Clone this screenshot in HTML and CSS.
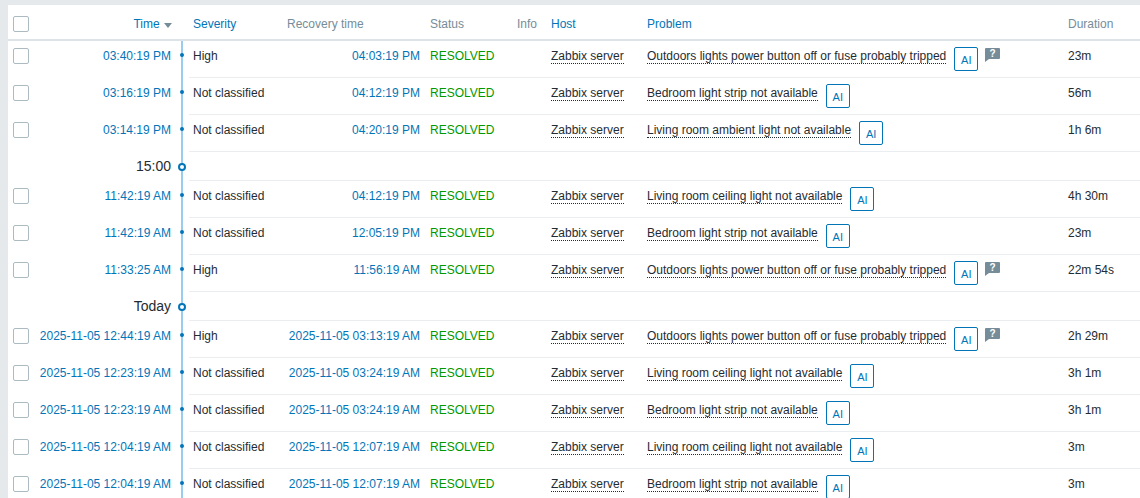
FILE: index.html
```html
<!DOCTYPE html>
<html lang="en">
<head>
    <meta charset="UTF-8">
    <title>Problems</title>
    <link rel="stylesheet" href="styles.css">
</head>
<body>
    <div class="container">
        <table class="problems">
            <colgroup>
                <col class="col-check"><col class="col-time"><col class="col-line"><col class="col-severity"><col class="col-recovery"><col class="col-status"><col class="col-info"><col class="col-host"><col class="col-problem"><col>
            </colgroup>
            <thead>
                <tr>
                    <th><span class="check"></span></th>
                    <th class="right"><a>Time <span class="sort"></span></a></th>
                    <th></th>
                    <th><a>Severity</a></th>
                    <th>Recovery time</th>
                    <th>Status</th>
                    <th>Info</th>
                    <th><a>Host</a></th>
                    <th><a>Problem</a></th>
                    <th>Duration</th>
                </tr>
            </thead>
            <tbody>
                <tr>
                    <td><span class="check"></span></td><td class="time"><a>03:40:19 PM</a></td><td class="line"><i class="dot"></i></td><td class="b">High</td><td class="b right"><a>04:03:19 PM</a></td><td class="b ok">RESOLVED</td><td class="b"></td><td class="b"><span class="dotted">Zabbix server</span></td>
                    <td class="b"><span class="dotted">Outdoors lights power button off or fuse probably tripped</span><span class="ai">AI</span><svg class="msg" width="15" height="14" viewBox="0 0 15 14"><path d="M1 0h13a1 1 0 0 1 1 1v9a1 1 0 0 1-1 1H4l-4 3V1a1 1 0 0 1 1-1z" fill="#768d99"/><text x="7.5" y="9" text-anchor="middle" class="msg-text">?</text></svg></td><td class="b">23m</td>
                </tr>
                <tr>
                    <td><span class="check"></span></td><td class="time"><a>03:16:19 PM</a></td><td class="line"><i class="dot"></i></td><td class="b">Not classified</td><td class="b right"><a>04:12:19 PM</a></td><td class="b ok">RESOLVED</td><td class="b"></td><td class="b"><span class="dotted">Zabbix server</span></td>
                    <td class="b"><span class="dotted">Bedroom light strip not available</span><span class="ai">AI</span></td><td class="b">56m</td>
                </tr>
                <tr>
                    <td><span class="check"></span></td><td class="time"><a>03:14:19 PM</a></td><td class="line"><i class="dot"></i></td><td class="b">Not classified</td><td class="b right"><a>04:20:19 PM</a></td><td class="b ok">RESOLVED</td><td class="b"></td><td class="b"><span class="dotted">Zabbix server</span></td>
                    <td class="b"><span class="dotted">Living room ambient light not available</span><span class="ai">AI</span></td><td class="b">1h 6m</td>
                </tr>
                <tr class="group">
                    <td></td><td class="time">15:00</td><td class="line"><i class="ring"></i></td><td class="b" colspan="7"></td>
                </tr>
                <tr>
                    <td><span class="check"></span></td><td class="time"><a>11:42:19 AM</a></td><td class="line"><i class="dot"></i></td><td class="b">Not classified</td><td class="b right"><a>04:12:19 PM</a></td><td class="b ok">RESOLVED</td><td class="b"></td><td class="b"><span class="dotted">Zabbix server</span></td>
                    <td class="b"><span class="dotted">Living room ceiling light not available</span><span class="ai">AI</span></td><td class="b">4h 30m</td>
                </tr>
                <tr>
                    <td><span class="check"></span></td><td class="time"><a>11:42:19 AM</a></td><td class="line"><i class="dot"></i></td><td class="b">Not classified</td><td class="b right"><a>12:05:19 PM</a></td><td class="b ok">RESOLVED</td><td class="b"></td><td class="b"><span class="dotted">Zabbix server</span></td>
                    <td class="b"><span class="dotted">Bedroom light strip not available</span><span class="ai">AI</span></td><td class="b">23m</td>
                </tr>
                <tr>
                    <td><span class="check"></span></td><td class="time"><a>11:33:25 AM</a></td><td class="line"><i class="dot"></i></td><td class="b">High</td><td class="b right"><a>11:56:19 AM</a></td><td class="b ok">RESOLVED</td><td class="b"></td><td class="b"><span class="dotted">Zabbix server</span></td>
                    <td class="b"><span class="dotted">Outdoors lights power button off or fuse probably tripped</span><span class="ai">AI</span><svg class="msg" width="15" height="14" viewBox="0 0 15 14"><path d="M1 0h13a1 1 0 0 1 1 1v9a1 1 0 0 1-1 1H4l-4 3V1a1 1 0 0 1 1-1z" fill="#768d99"/><text x="7.5" y="9" text-anchor="middle" class="msg-text">?</text></svg></td><td class="b">22m 54s</td>
                </tr>
                <tr class="group">
                    <td></td><td class="time">Today</td><td class="line"><i class="ring"></i></td><td class="b" colspan="7"></td>
                </tr>
                <tr>
                    <td><span class="check"></span></td><td class="time"><a>2025-11-05 12:44:19 AM</a></td><td class="line"><i class="dot"></i></td><td class="b">High</td><td class="b right"><a>2025-11-05 03:13:19 AM</a></td><td class="b ok">RESOLVED</td><td class="b"></td><td class="b"><span class="dotted">Zabbix server</span></td>
                    <td class="b"><span class="dotted">Outdoors lights power button off or fuse probably tripped</span><span class="ai">AI</span><svg class="msg" width="15" height="14" viewBox="0 0 15 14"><path d="M1 0h13a1 1 0 0 1 1 1v9a1 1 0 0 1-1 1H4l-4 3V1a1 1 0 0 1 1-1z" fill="#768d99"/><text x="7.5" y="9" text-anchor="middle" class="msg-text">?</text></svg></td><td class="b">2h 29m</td>
                </tr>
                <tr>
                    <td><span class="check"></span></td><td class="time"><a>2025-11-05 12:23:19 AM</a></td><td class="line"><i class="dot"></i></td><td class="b">Not classified</td><td class="b right"><a>2025-11-05 03:24:19 AM</a></td><td class="b ok">RESOLVED</td><td class="b"></td><td class="b"><span class="dotted">Zabbix server</span></td>
                    <td class="b"><span class="dotted">Living room ceiling light not available</span><span class="ai">AI</span></td><td class="b">3h 1m</td>
                </tr>
                <tr>
                    <td><span class="check"></span></td><td class="time"><a>2025-11-05 12:23:19 AM</a></td><td class="line"><i class="dot"></i></td><td class="b">Not classified</td><td class="b right"><a>2025-11-05 03:24:19 AM</a></td><td class="b ok">RESOLVED</td><td class="b"></td><td class="b"><span class="dotted">Zabbix server</span></td>
                    <td class="b"><span class="dotted">Bedroom light strip not available</span><span class="ai">AI</span></td><td class="b">3h 1m</td>
                </tr>
                <tr>
                    <td><span class="check"></span></td><td class="time"><a>2025-11-05 12:04:19 AM</a></td><td class="line"><i class="dot"></i></td><td class="b">Not classified</td><td class="b right"><a>2025-11-05 12:07:19 AM</a></td><td class="b ok">RESOLVED</td><td class="b"></td><td class="b"><span class="dotted">Zabbix server</span></td>
                    <td class="b"><span class="dotted">Living room ceiling light not available</span><span class="ai">AI</span></td><td class="b">3m</td>
                </tr>
                <tr>
                    <td><span class="check"></span></td><td class="time"><a>2025-11-05 12:04:19 AM</a></td><td class="line"><i class="dot"></i></td><td class="b">Not classified</td><td class="b right"><a>2025-11-05 12:07:19 AM</a></td><td class="b ok">RESOLVED</td><td class="b"></td><td class="b"><span class="dotted">Zabbix server</span></td>
                    <td class="b"><span class="dotted">Bedroom light strip not available</span><span class="ai">AI</span></td><td class="b">3m</td>
                </tr>
            </tbody>
        </table>
    </div>
</body>
</html>
```

FILE: styles.css
```css
html, body {
    height: 498px;
    overflow: hidden;
}

body {
    margin: 0;
    padding: 5px 0 0 8px;
    box-sizing: border-box;
    background-color: #e5e9ec;
    font-family: "Liberation Sans", Arial, sans-serif;
    font-size: 12px;
    line-height: 14px;
    color: #1f2c33;
}

.container {
    background: #fff;
}

.problems {
    width: 1132px;
    table-layout: fixed;
    border-collapse: separate;
    border-spacing: 0;
}

.col-check { width: 24px; }
.col-time { width: 144px; }
.col-line { width: 13px; }
.col-severity { width: 94px; }
.col-recovery { width: 143px; }
.col-status { width: 87px; }
.col-info { width: 34px; }
.col-host { width: 96px; }
.col-problem { width: 421px; }

th, td {
    padding: 0 4px;
    text-align: left;
    vertical-align: top;
    font-weight: normal;
    white-space: nowrap;
}

th {
    height: 36px;
    padding-top: 12px;
    box-sizing: border-box;
    color: #768d99;
    border-bottom: 2px solid #dde3e6;
}

th:first-child,
td:first-child {
    padding: 0 0 0 5px;
}

th:first-child {
    padding-top: 11px;
}

td {
    height: 28px;
    padding-top: 8px;
}

td:first-child {
    padding-top: 7px;
}

td.b {
    border-bottom: 1px solid #ebeef0;
}

a {
    color: #0275b8;
}

.right {
    text-align: right;
    padding-right: 6px;
}

th.right {
    padding-right: 4px;
}

.time {
    text-align: right;
    padding-right: 5px;
}

.line {
    position: relative;
    padding: 0;
}

.line::before {
    content: "";
    position: absolute;
    top: 0;
    bottom: 0;
    left: 5px;
    width: 2px;
    background-color: #98cdf0;
}

.dot {
    position: absolute;
    top: 12px;
    left: 4px;
    width: 4px;
    height: 4px;
    border-radius: 50%;
    background-color: #0275b8;
}

.ring {
    position: absolute;
    top: 11px;
    left: 2px;
    width: 8px;
    height: 8px;
    box-sizing: border-box;
    border: 2px solid #0275b8;
    border-radius: 50%;
    background-color: #fff;
}

.group td {
    height: 20px;
}

.group .time {
    font-size: 14px;
    padding-top: 7px;
}

.check {
    display: block;
    width: 16px;
    height: 16px;
    box-sizing: border-box;
    border: 1px solid #acbbc2;
    border-radius: 2px;
    background-color: #fff;
}

.sort {
    display: inline-block;
    margin-left: 1px;
    border-left: 4px solid transparent;
    border-right: 4px solid transparent;
    border-top: 5px solid #768d99;
}

.ok {
    color: #009900;
}

.dotted {
    display: inline-block;
    border-bottom: 1px dotted #1f2c33;
    vertical-align: top;
}

.ai {
    display: inline-block;
    width: 24px;
    height: 24px;
    box-sizing: border-box;
    margin: -2px 0 0 8px;
    border: 1px solid #0275b8;
    border-radius: 2px;
    color: #0275b8;
    font-size: 11px;
    line-height: 24px;
    text-align: center;
    vertical-align: top;
}

.msg {
    margin: -1px 0 0 7px;
    vertical-align: top;
}

.msg-text {
    fill: #fff;
    font-size: 10px;
    font-weight: bold;
}
```
